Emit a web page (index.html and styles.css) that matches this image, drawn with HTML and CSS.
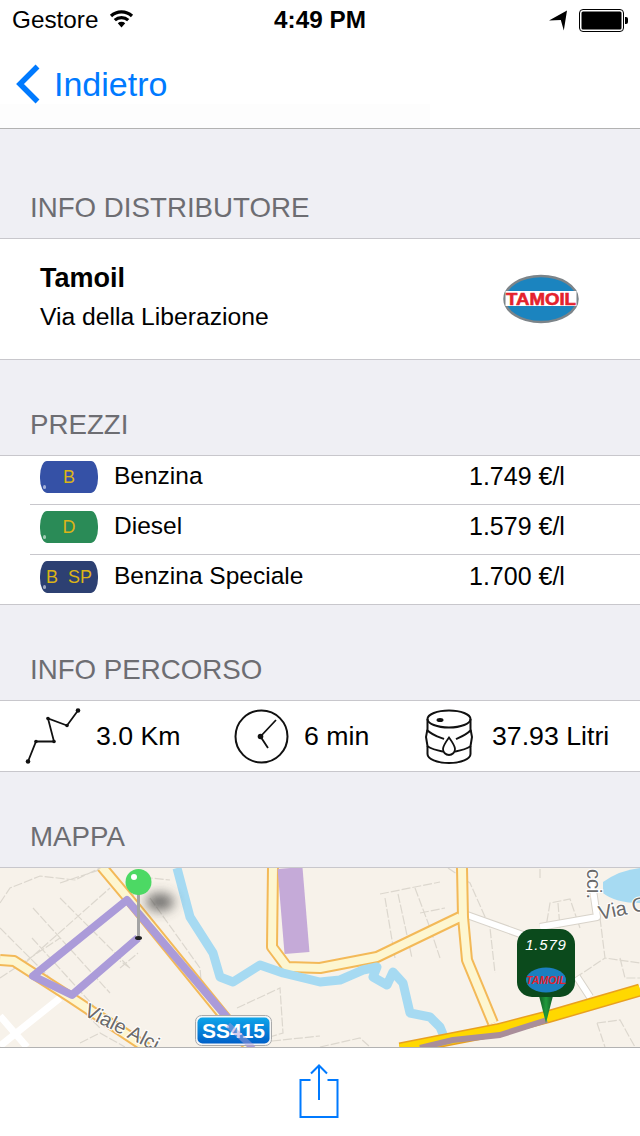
FILE: index.html
```html
<!DOCTYPE html>
<html lang="it">
<head>
<meta charset="utf-8">
<title>Info distributore</title>
<link rel="stylesheet" href="styles.css">
</head>
<body>
<div class="app">
  <header class="top">
    <div class="status">
      <div class="status-left">
        <span>Gestore</span>
        <svg class="wifi" width="25" height="19" viewBox="0 0 25 19"><path d="M12.500 18.500L8.800 14.300A5.500 5.500 0 0 1 16.200 14.300Z" fill="#000"/><path d="M5.800 11.200A9.800 9.800 0 0 1 19.200 11.200M2 7A15.300 15.300 0 0 1 23 7" fill="none" stroke="#000" stroke-width="3.200"/></svg>
      </div>
      <div class="status-time">4:49 PM</div>
      <div class="status-right">
        <svg width="18" height="21" viewBox="0 0 18 21"><path d="M0 10.500L18 .5 14.800 20.500 11.800 10 Z" fill="#000"/></svg>
        <svg width="49" height="23" viewBox="0 0 49 23"><rect x=".5" y=".5" width="44" height="22" rx="3.500" fill="#fff" stroke="#000"/><rect x="2.500" y="2.500" width="40" height="18" rx="1.500" fill="#000"/><path d="M46 8h1a2 2 0 0 1 2 2v3a2 2 0 0 1-2 2h-1z" fill="#000"/></svg>
      </div>
    </div>
    <nav class="nav">
      <svg class="back-icon" width="26" height="40" viewBox="0 0 26 40"><path d="M22.500 2.500L5 20l17.500 17.500" fill="none" stroke="#007aff" stroke-width="5.500"/></svg>
      <span class="back-label">Indietro</span>
    </nav>
  </header>

  <div class="section-head section-head-first">INFO DISTRIBUTORE</div>
  <section class="card station">
    <div>
      <div class="station-name">Tamoil</div>
      <div class="station-addr">Via della Liberazione</div>
    </div>
    <svg class="station-logo" width="76" height="50" viewBox="0 0 76 50">
      <ellipse cx="38" cy="25" rx="36.500" ry="23" fill="#1b84bf" stroke="#7c8489" stroke-width="2.500"/>
      <rect x="2.500" y="17" width="71" height="15" fill="#fff"/>
      <text class="logo-text" x="38" y="30.500" text-anchor="middle" textLength="70" lengthAdjust="spacingAndGlyphs">TAMOIL</text>
    </svg>
  </section>

  <div class="section-head">PREZZI</div>
  <section class="card prices">
    <div class="price-row price-row-first">
      <div class="barrel barrel-b">B</div>
      <span class="price-text">Benzina</span>
      <span class="price-text price-value">1.749 €/l</span>
    </div>
    <div class="price-row">
      <div class="barrel barrel-d">D</div>
      <span class="price-text">Diesel</span>
      <span class="price-text price-value">1.579 €/l</span>
    </div>
    <div class="price-row price-row-last">
      <div class="barrel barrel-s">B&nbsp;&nbsp;SP</div>
      <span class="price-text">Benzina Speciale</span>
      <span class="price-text price-value">1.700 €/l</span>
    </div>
  </section>

  <div class="section-head">INFO PERCORSO</div>
  <section class="card route">
    <div class="route-item">
      <svg class="route-icon-a" width="56" height="56" viewBox="0 0 56 56">
        <path d="M3 53.500L11 33.500H29L23 10.500L42 17.500L53 2.500" fill="none" stroke="#111" stroke-width="1.800"/>
        <g fill="#111"><circle cx="3" cy="53.500" r="2.300"/><circle cx="11" cy="33.500" r="1.800"/><circle cx="29" cy="33.500" r="1.800"/><circle cx="23" cy="10.500" r="1.800"/><circle cx="42" cy="17.500" r="1.800"/><circle cx="53" cy="2.500" r="2.300"/></g>
      </svg>
      <span>3.0 Km</span>
    </div>
    <div class="route-item">
      <svg class="route-icon-b" width="55" height="55" viewBox="0 0 55 55">
        <circle cx="27.500" cy="27.500" r="26" fill="none" stroke="#111" stroke-width="2"/>
        <path d="M42 11L26.500 27.500L34 39" fill="none" stroke="#111" stroke-width="1.800"/>
        <circle cx="26.500" cy="27.500" r="2.800" fill="#111"/>
      </svg>
      <span>6 min</span>
    </div>
    <div class="route-item">
      <svg class="route-icon-c" width="48" height="55" viewBox="0 0 48 55">
        <g fill="none" stroke="#111" stroke-width="2">
          <ellipse cx="24" cy="10" rx="21.500" ry="8.500"/>
          <path d="M2.500 10V20L1 28 2.500 37V45C2.500 50 12 54 24 54S45.500 50 45.500 45V37L47 28 45.500 20V10"/>
          <path d="M2 21C8 27 17 29 19 30M46 21C40 27 33 29 31 30M2 37C8 41 15 42 18 42.500M46 37C40 41 33 42 30 42.500"/>
          <path d="M24 28.500C20 34 18 37 18 40A6 6 0 0 0 30 40C30 37 28 34 24 28.500Z" stroke-width="1.800"/>
        </g>
        <ellipse cx="15" cy="11" rx="3.500" ry="2" fill="#111"/>
      </svg>
      <span>37.93 Litri</span>
    </div>
  </section>

  <div class="section-head">MAPPA</div>
  <section class="map">
    <svg width="640" height="179" viewBox="0 0 640 179">
      <defs>
        <linearGradient id="shield" x1="0" y1="0" x2="0" y2="1"><stop offset="0" stop-color="#0ea5ea"/><stop offset="1" stop-color="#0060c8"/></linearGradient>
        <linearGradient id="tip" x1="0" y1="0" x2="1" y2="0"><stop offset="0" stop-color="#0b4a1c"/><stop offset=".5" stop-color="#1f9a3c"/><stop offset="1" stop-color="#0b4a1c"/></linearGradient>
        <filter id="soft" x="-100%" y="-150%" width="300%" height="400%"><feGaussianBlur stdDeviation="6"/></filter>
      </defs>
      <rect width="640" height="179" fill="#f7f2ea"/>

      <g fill="none" stroke="#dcd7ce" stroke-width="1.200" stroke-dasharray="9 2">
        <path d="M0 35L10 20 40 8 75 12 100 0M60 15L105 0"/>
        <path d="M0 60L60 120 100 160M25 95L110 20M33 40L110 125M60 30L130 100M32 70L100 145M0 110L60 70"/>
        <path d="M120 100L138 85M130 100L120 93"/>
        <path d="M150 30L200 100 202 125M130 30L150 10 170 12"/>
        <path d="M237 140L280 120 283 165 240 178"/>
        <path d="M80 175L100 165 125 179"/>
        <path d="M380 26L440 14M385 30L395 90M398 26L412 90M415 20L430 60 L440 90M420 45L445 40M448 0L470 15 490 60 495 105"/>
        <path d="M545 65L550 35 570 31 580 60M558 35L560 60M540 10L540 0"/>
        <path d="M600 50L605 90 640 95M620 90L625 110 640 110M575 110L605 90"/>
        <path d="M597 155L620 152 635 179M597 155L605 179M320 179L360 170 370 179"/>
        <path d="M272 173L320 168"/>
      </g>

      <g fill="none" stroke-linejoin="round">
        <path d="M0 148L27 179M60 130L0 178" stroke="#fff" stroke-width="7"/>
        <path d="M467 47L523 67M540 59L597 49L592 15M577 109L590 129" stroke="#d8d3ca" stroke-width="8"/>
        <path d="M467 47L523 67M540 59L597 49L592 15M577 109L590 129" stroke="#fff" stroke-width="6"/>
        <path d="M102 -1L128 30L250 180M0 92L14 93L70 129L147 180M273 0L272 79L287 99L320 100L377 89L460 49M462 0L463 49L467 92L493 155" stroke="#f3b958" stroke-width="12"/>
        <path d="M102 -1L128 30L250 180M0 92L14 93L70 129L147 180M273 0L272 79L287 99L320 100L377 89L460 49M462 0L463 49L467 92L493 155" stroke="#fdf6d0" stroke-width="8"/>
        <path d="M177 0L190 49L213 85L220 109L233 114L260 97L283 105L320 114L340 112L363 102L377 99L373 109L387 117L393 104L403 115L410 145L430 149L440 159L445 171" stroke="#a6daf2" stroke-width="9"/>
        <path d="M640 122L547 149L497 162L400 181" stroke="#e8a020" stroke-width="13"/>
        <path d="M640 122L547 149L497 162L400 181" stroke="#ffd800" stroke-width="10"/>
        <path d="M290 0L297 85" stroke="#c5aad8" stroke-width="25"/>
        <path d="M138 70L72 127L33 108L127 32L253 180" stroke="#ab9bd9" stroke-width="8"/>
        <path d="M547 152L500 167L453 172L420 180" stroke="#a98e9a" stroke-width="6"/>
      </g>

      <path d="M603 14Q620 2 640 0V35Q615 35 603 25Z" fill="#a6daf2"/>
      <text class="map-label" transform="translate(83 147) rotate(27)">Viale Alci</text>
      <text class="map-label" transform="translate(587 1) rotate(90)">cci.</text>
      <text class="map-label" transform="translate(600 52) rotate(-12)">Via C</text>

      <ellipse cx="160" cy="34" rx="14" ry="9" fill="#444" opacity=".75" filter="url(#soft)"/>
      <rect x="137" y="25" width="3" height="44" fill="#a4a4a4"/>
      <ellipse cx="138.500" cy="70" rx="3.500" ry="2" fill="#222"/>
      <circle cx="138.500" cy="14" r="13" fill="#4cd964"/>
      <circle cx="134" cy="9" r="3" fill="#fff"/>

      <rect x="195.500" y="147.500" width="76" height="30" rx="6" fill="#f5f5f5" stroke="#aaa"/>
      <rect x="197.500" y="149.500" width="72" height="26" rx="5" fill="url(#shield)"/>
      <text class="shield-text" x="233.500" y="170" text-anchor="middle">SS415</text>
      <path d="M228 157L253 180" fill="none" stroke="#ab9bd9" stroke-width="6" opacity=".5"/>

      <path d="M537 120H555L546 155Z" fill="url(#tip)"/>
      <rect x="517" y="61" width="58" height="68" rx="15" fill="#0b4a1c"/>
      <text class="pin-price" x="546" y="82" text-anchor="middle">1.579</text>
      <ellipse cx="546" cy="112" rx="20" ry="12.500" fill="#1b7fc0"/>
      <text class="pin-logo" x="546" y="115.500" text-anchor="middle" textLength="40" lengthAdjust="spacingAndGlyphs">TAMOIL</text>
    </svg>
  </section>

  <footer class="toolbar">
    <svg width="40" height="54" viewBox="0 0 40 54">
      <path d="M11.500 16H1.500V53H38.500V16H28.500M20 36V2M12 9.500L20 1.500L28 9.500" fill="none" stroke="#007aff" stroke-width="2"/>
    </svg>
  </footer>
</div>
</body>
</html>
```

FILE: styles.css
```css
* { box-sizing: border-box; }
html, body { margin: 0; padding: 0; }
body { font-family: "Liberation Sans", Arial, sans-serif; color: #000; background: #efeff4; }
.app { width: 640px; height: 1136px; display: flex; flex-direction: column; overflow: hidden; }

.top { background: #fff; border-bottom: 1px solid #b2b2b2; }
.status { height: 40px; display: grid; grid-template-columns: 1fr auto 1fr; align-items: center; padding: 0 12px; font-size: 24.300px; }
.status-left { display: flex; align-items: center; gap: 11px; }
.wifi { margin-top: -4px; }
.status-time { font-weight: 700; }
.status-right { display: flex; justify-content: flex-end; align-items: center; gap: 12px; }

.nav { height: 88px; display: flex; align-items: center; padding: 0 0 0 15px; gap: 13px; background: linear-gradient(#fdfdfd, #fdfdfd) left bottom / 430px 24px no-repeat; }
.back-icon { flex: none; }
.back-label { color: #007aff; font-size: 34px; }

.section-head { height: 96px; display: flex; align-items: flex-end; padding: 0 0 14px 30px; font-size: 27.700px; line-height: 32px; color: #6d6d72; border-bottom: 1px solid #c8c7cc; flex: none; }
.section-head-first { height: 110px; }

.card { background: #fff; border-bottom: 1px solid #c8c7cc; flex: none; }

.station { height: 121px; display: flex; justify-content: space-between; align-items: center; padding: 0 61px 0 40px; }
.station-name { font-size: 27px; font-weight: 700; line-height: 32px; margin-top: -4px; margin-bottom: 7px; }
.station-addr { font-size: 24.700px; line-height: 32px; }
.station-logo { margin-top: -1px; }
.logo-text { font: 700 17px "Liberation Sans", Arial, sans-serif; stroke: #e4222c; stroke-width: .6px; fill: #e4222c; }

.prices { border-bottom: none; font-size: 24.500px; }
.price-row { margin-left: 30px; padding: 6px 0 11px 10px; display: grid; grid-template-columns: 58px 339px auto; column-gap: 16px; align-items: center; border-bottom: 1px solid #c8c7cc; }
.price-text { margin-top: -2px; }
.price-value { font-size: 25px; }
.price-row-first { padding-top: 5px; }
.price-row-last { margin-left: 0; padding-left: 40px; }
.barrel { width: 58px; height: 32px; border-radius: 7px / 15px; color: #dcb417; font-size: 18px; line-height: 32px; text-align: center; position: relative; white-space: nowrap; background-image: linear-gradient(90deg, transparent 0 32%, rgba(0, 0, 0, .12) 32% 33%, transparent 33% 65%, rgba(0, 0, 0, .12) 65% 66%, transparent 66%); }
.barrel::before { content: ""; position: absolute; left: 3px; bottom: 4px; width: 3px; height: 4px; border-radius: 2px; background: rgba(255, 255, 255, .55); }
.barrel-b { background-color: #3551a6; }
.barrel-d { background-color: #2a8b57; }
.barrel-s { background-color: #2d4072; }

.route { height: 71px; display: grid; grid-template-columns: 209px 191px 1fr; align-items: center; padding-left: 25px; font-size: 26.700px; }
.route-item { display: flex; align-items: center; }
.route-item span { white-space: nowrap; }
.route-icon-a { margin-right: 15px; }
.route-icon-b { margin-right: 15px; }
.route-icon-c { margin-right: 19px; }

.map { height: 179px; flex: none; overflow: hidden; }
.map svg { display: block; }
.map-label { font: 20px "Liberation Sans", Arial, sans-serif; fill: #6a6a6a; stroke: #fff; stroke-width: 2px; paint-order: stroke; }
.shield-text { font: 700 21px "Liberation Sans", Arial, sans-serif; fill: #fff; }
.pin-price { font: italic 15px "Liberation Sans", Arial, sans-serif; letter-spacing: .8px; fill: #fff; }
.pin-logo { font: italic 700 10px "Liberation Sans", Arial, sans-serif; fill: #e4222c; }

.toolbar { flex: 1; background: #fff; border-top: 1px solid #b2b2b2; display: flex; justify-content: center; align-items: flex-start; padding: 16px 2px 0 0; }
```
